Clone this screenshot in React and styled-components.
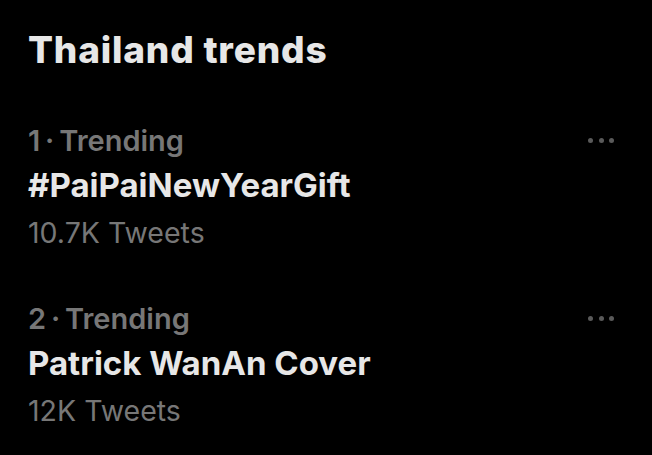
import React from 'react'
import styled, { createGlobalStyle } from 'styled-components'

const GlobalStyle = createGlobalStyle`
  html, body {
    margin: 0;
    padding: 0;
    background: #000;
  }
  body {
    font-family: Inter, 'Noto Sans', sans-serif;
    -webkit-font-smoothing: antialiased;
  }
`

const trends = [
  { rank: 1, name: '#PaiPaiNewYearGift', count: '10.7K Tweets' },
  { rank: 2, name: 'Patrick WanAn Cover', count: '12K Tweets' },
]

const Panel = styled.section`
  width: 652px;
  height: 455px;
  background: #000;
  padding: 27px 38px 0 28px;
  box-sizing: border-box;
  overflow: hidden;
`

const Title = styled.h2`
  margin: 0 0 47px;
  font-size: 37px;
  line-height: 45px;
  font-weight: 800;
  color: #e7e7e7;
  letter-spacing: 0.8px;
`

const List = styled.div`
  display: flex;
  flex-direction: column;
  gap: 41px;
`

const Item = styled.article`
  display: flex;
  justify-content: space-between;
  align-items: flex-start;
`

const Text = styled.div`
  display: flex;
  flex-direction: column;
`

const Meta = styled.div`
  font-size: 29px;
  line-height: 44px;
  font-weight: 600;
  color: #777;
`

const Name = styled.div`
  font-size: 33px;
  line-height: 44px;
  font-weight: 700;
  color: #e7e7e7;
`

const Count = styled.div`
  margin-top: 3px;
  font-size: 28.5px;
  line-height: 46px;
  font-weight: 400;
  color: #777;
`

const More = styled.div`
  display: flex;
  gap: 5.5px;
  padding-top: 19px;
`

const Dot = styled.span`
  width: 5px;
  height: 5px;
  border-radius: 50%;
  background: #5a5a5a;
`

export default function App() {
  return (
    <>
      <GlobalStyle />
      <Panel>
        <Title>Thailand trends</Title>
        <List>
          {trends.map((t) => (
            <Item key={t.rank}>
              <Text>
                <Meta>{t.rank}{'\u2009·\u2009'}Trending</Meta>
                <Name>{t.name}</Name>
                <Count>{t.count}</Count>
              </Text>
              <More>
                <Dot />
                <Dot />
                <Dot />
              </More>
            </Item>
          ))}
        </List>
      </Panel>
    </>
  )
}
